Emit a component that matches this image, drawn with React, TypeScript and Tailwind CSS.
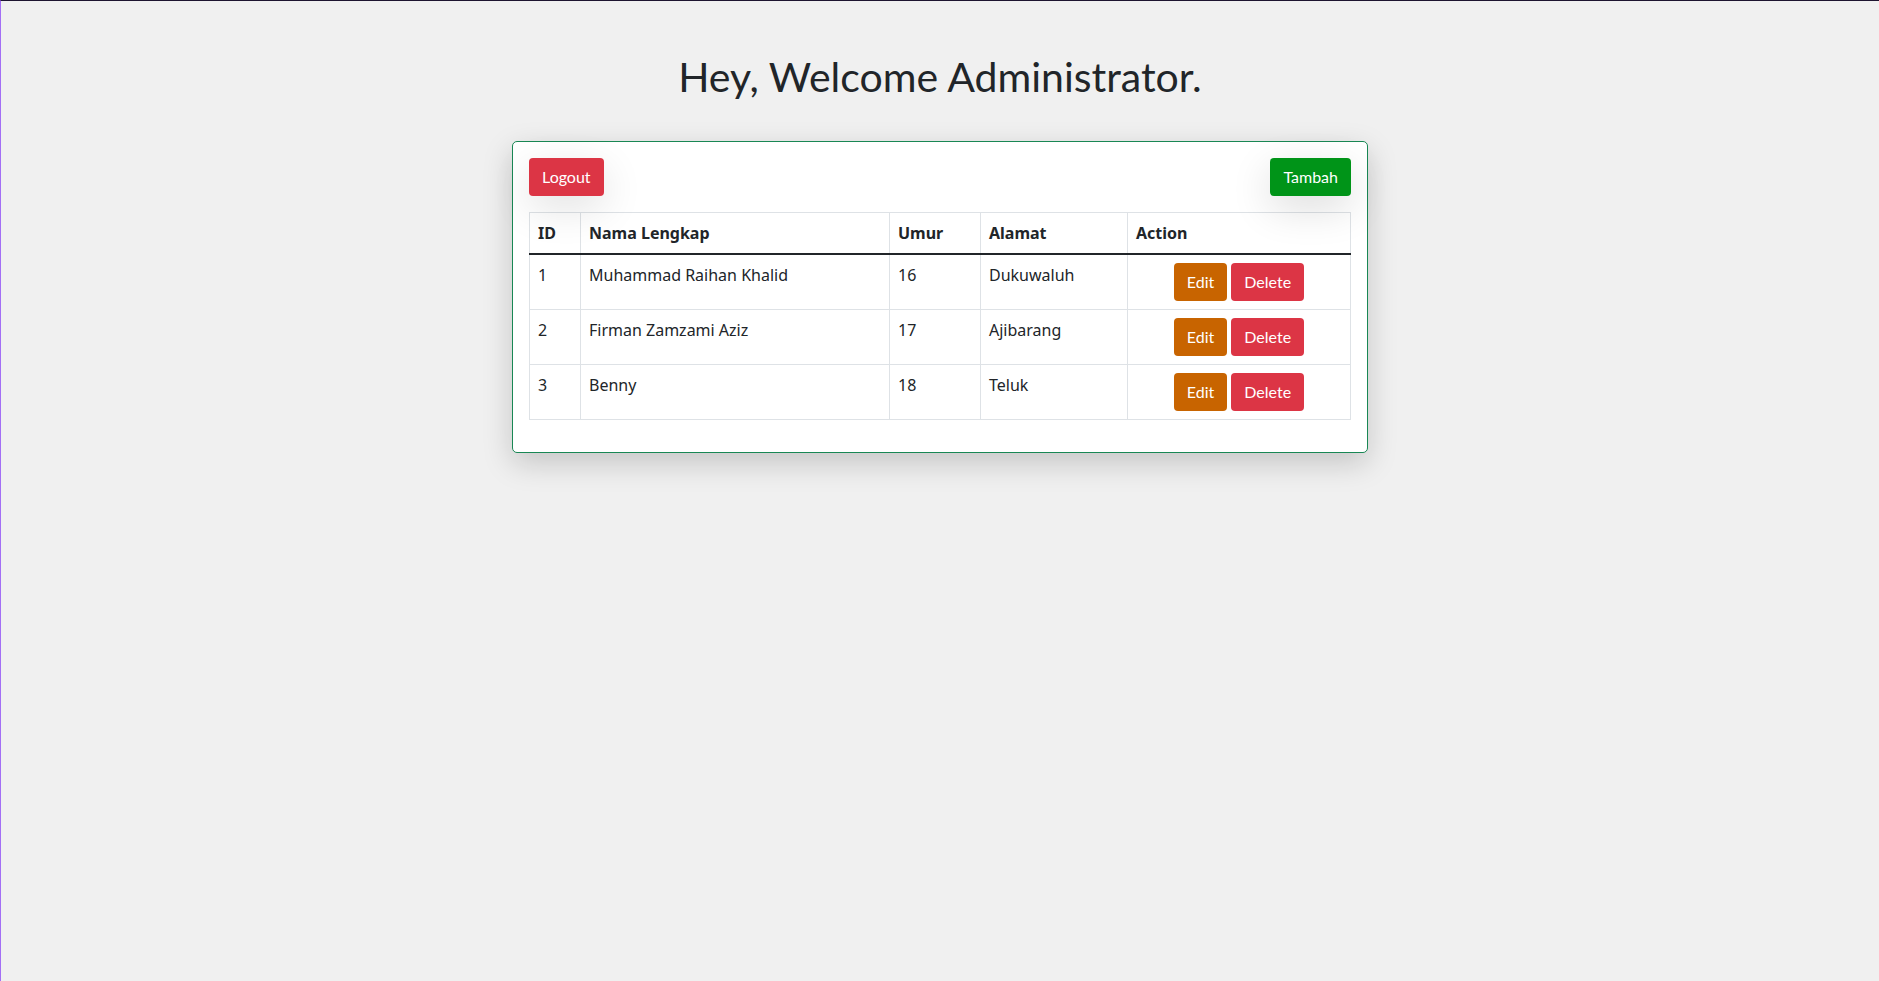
const rows = [
  { id: 1, nama: "Muhammad Raihan Khalid", umur: 16, alamat: "Dukuwaluh" },
  { id: 2, nama: "Firman Zamzami Aziz", umur: 17, alamat: "Ajibarang" },
  { id: 3, nama: "Benny", umur: 18, alamat: "Teluk" },
]

const btn = "rounded-[4px] border border-transparent px-3 py-[6px] text-[16px] leading-6 text-white font-['Lato',sans-serif]"

export default function App() {
  return (
    <div className="flex min-h-screen w-full flex-col items-center border-t border-l border-t-[#1d1430] border-l-[#a36ff5] bg-[#f0f0f0] text-[#212529] font-['Noto_Sans','Open_Sans',sans-serif]">
      <h1 className="mt-[51px] text-[41px] leading-[49px] font-['Lato',sans-serif] font-normal">
        {"Hey, Welcome Administrator."}
      </h1>
      <section className="mt-[40px] w-[856px] rounded-[5px] border border-[#198754] bg-white p-4 shadow-[0_10px_30px_rgba(0,0,0,0.18)]">
        <div className="flex items-start justify-between">
          <button className={`${btn} bg-[#dc3545] shadow-[0_12px_40px_rgba(0,0,0,0.12)]`}>Logout</button>
          <button className={`${btn} bg-[#009418] shadow-[0_12px_40px_rgba(0,0,0,0.14)]`}>Tambah</button>
        </div>
        <table className="mt-4 mb-4 w-full table-fixed border-collapse text-[16px] leading-6">
          <colgroup>
            <col className="w-[51px]" />
            <col className="w-[309px]" />
            <col className="w-[91px]" />
            <col className="w-[147px]" />
            <col />
          </colgroup>
          <thead>
            <tr>
              {["ID", "Nama Lengkap", "Umur", "Alamat", "Action"].map((h) => (
                <th key={h} className="border border-[#dee2e6] border-b-2 border-b-[#212529] px-2 py-2 text-left font-bold">
                  {h}
                </th>
              ))}
            </tr>
          </thead>
          <tbody>
            {rows.map((r) => (
              <tr key={r.id}>
                <td className="border border-[#dee2e6] p-2 align-top">{r.id}</td>
                <td className="border border-[#dee2e6] p-2 align-top">{r.nama}</td>
                <td className="border border-[#dee2e6] p-2 align-top">{r.umur}</td>
                <td className="border border-[#dee2e6] p-2 align-top">{r.alamat}</td>
                <td className="border border-[#dee2e6] p-2 align-top">
                  <div className="flex justify-center gap-1">
                    <button className={`${btn} bg-[#c86400]`}>Edit</button>
                    <button className={`${btn} bg-[#dc3545]`}>Delete</button>
                  </div>
                </td>
              </tr>
            ))}
          </tbody>
        </table>
      </section>
    </div>
  )
}
